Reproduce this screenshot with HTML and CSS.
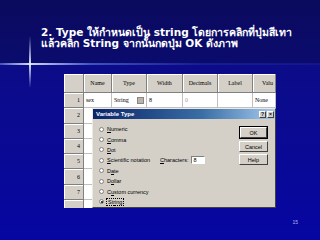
FILE: index.html
```html
<!DOCTYPE html>
<html lang="th">
<head>
    <meta charset="UTF-8">
    <title>Type - String</title>
    <link rel="stylesheet" href="styles.css">
</head>
<body>
    <section class="slide">
        <div class="flare-h"></div>
        <div class="flare-v"></div>

        <h1 class="title">2. Type ให้กำหนดเป็น string โดยการคลิกที่ปุ่มสีเทา<br>แล้วคลิก String จากนั้นกดปุ่ม OK ดังภาพ</h1>

        <div class="shot">
            <div class="sheet">
                <div class="hd"></div>
                <div class="hd">Name</div>
                <div class="hd">Type</div>
                <div class="hd">Width</div>
                <div class="hd">Decimals</div>
                <div class="hd">Label</div>
                <div class="hd left">Valu</div>

                <div class="rh">1</div>
                <div class="cell">sex</div>
                <div class="cell type">String <span class="dots"></span></div>
                <div class="cell">8</div>
                <div class="cell dim">0</div>
                <div class="cell"></div>
                <div class="cell">None</div>

                <div class="rh">2</div><div class="cell"></div><div class="cell"></div><div class="cell"></div><div class="cell"></div><div class="cell"></div><div class="cell"></div>
                <div class="rh">3</div><div class="cell"></div><div class="cell"></div><div class="cell"></div><div class="cell"></div><div class="cell"></div><div class="cell"></div>
                <div class="rh">4</div><div class="cell"></div><div class="cell"></div><div class="cell"></div><div class="cell"></div><div class="cell"></div><div class="cell"></div>
                <div class="rh">5</div><div class="cell"></div><div class="cell"></div><div class="cell"></div><div class="cell"></div><div class="cell"></div><div class="cell"></div>
                <div class="rh">6</div><div class="cell"></div><div class="cell"></div><div class="cell"></div><div class="cell"></div><div class="cell"></div><div class="cell"></div>
                <div class="rh">7</div><div class="cell"></div><div class="cell"></div><div class="cell"></div><div class="cell"></div><div class="cell"></div><div class="cell"></div>
                <div class="rh"></div><div class="cell"></div><div class="cell"></div><div class="cell"></div><div class="cell"></div><div class="cell"></div><div class="cell"></div>
            </div>

            <div class="dialog">
                <div class="titlebar">
                    <span>Variable Type</span>
                    <span class="tbtn">?</span>
                    <span class="tbtn">×</span>
                </div>
                <div class="dlg-body">
                    <div class="options">
                        <label class="opt"><i class="radio"></i><span><u>N</u>umeric</span></label>
                        <span></span>
                        <label class="opt"><i class="radio"></i><span><u>C</u>omma</span></label>
                        <span></span>
                        <label class="opt"><i class="radio"></i><span><u>D</u>ot</span></label>
                        <span></span>
                        <label class="opt"><i class="radio"></i><span><u>S</u>cientific notation</span></label>
                        <div class="chars"><span><u>C</u>haracters:</span> <span class="field">8</span></div>
                        <label class="opt"><i class="radio"></i><span>D<u>a</u>te</span></label>
                        <span></span>
                        <label class="opt"><i class="radio"></i><span>D<u>o</u>llar</span></label>
                        <span></span>
                        <label class="opt"><i class="radio"></i><span>C<u>u</u>stom currency</span></label>
                        <span></span>
                        <label class="opt"><i class="radio on"></i><span class="focus">St<u>r</u>ing</span></label>
                    </div>
                    <div class="buttons">
                        <button class="def">OK</button>
                        <button>Cancel</button>
                        <button>Help</button>
                    </div>
                </div>
            </div>
        </div>

        <div class="page">15</div>
    </section>
</body>
</html>
```

FILE: styles.css
```css
* {
    margin: 0;
    padding: 0;
    box-sizing: border-box;
}

body {
    background-color: #0a0a6a;
}

.slide {
    position: relative;
    width: 320px;
    height: 240px;
    overflow: hidden;
    padding-top: 27px;
    background: linear-gradient(#0a0a5e 0px, #0b0b6e 63px, #0c0c88 65px, #0606a2 240px);
    font-family: "Liberation Sans", "Noto Sans", sans-serif;
}

/* sparkle line */
.flare-h {
    position: absolute;
    left: 0;
    top: 63px;
    width: 320px;
    height: 2px;
    background: linear-gradient(to right, rgba(120,150,255,.5), rgba(220,230,255,.95) 30px, rgba(110,140,255,.55) 90px, rgba(60,80,220,.25) 200px, rgba(60,80,220,.15));
}

.flare-v {
    position: absolute;
    left: 29px;
    top: 36px;
    width: 2px;
    height: 52px;
    background: linear-gradient(rgba(120,150,255,0), rgba(230,240,255,.95) 28px, rgba(120,150,255,0));
}

.title {
    margin-left: 41px;
    color: #fff;
    font-size: 10.5px;
    line-height: 11px;
    font-weight: bold;
    font-family: "DejaVu Sans", "Noto Sans", sans-serif;
    white-space: nowrap;
}

.shot {
    position: relative;
    margin: 25px 0 0 64px;
    width: 212px;
    height: 134px;
    overflow: hidden;
    background-color: #fff;
}

.sheet {
    display: grid;
    grid-template-columns: 20px 28px 35px 36px 35px 35px 23px;
    grid-template-rows: 19px;
    grid-auto-rows: 15.3px;
    font-family: "Liberation Serif", serif;
    font-size: 6px;
    color: #000;
}

.sheet .hd {
    background-color: #d4d0c8;
    border-right: 1px solid #808080;
    border-bottom: 1px solid #808080;
    box-shadow: inset 1px 1px 0 #fff;
    display: flex;
    align-items: center;
    justify-content: center;
    overflow: hidden;
    white-space: nowrap;
}

.sheet .hd.left {
    justify-content: flex-start;
    padding-left: 9px;
}

.sheet .rh {
    background-color: #d4d0c8;
    border-right: 1px solid #808080;
    border-bottom: 1px solid #808080;
    box-shadow: inset 1px 1px 0 #fff;
    padding-right: 3px;
    display: flex;
    align-items: center;
    justify-content: flex-end;
}

.sheet .cell {
    background-color: #fff;
    border-right: 1px solid #c0c0c0;
    border-bottom: 1px solid #c0c0c0;
    display: flex;
    align-items: center;
    padding-left: 2px;
    overflow: hidden;
    white-space: nowrap;
}

.sheet .cell.dim {
    color: #a0a0a0;
}

.sheet .cell.type {
    justify-content: space-between;
    padding-right: 2px;
}

.dots {
    width: 7px;
    height: 7px;
    background-color: #b8b4ac;
    border: 1px solid #8a8780;
}

.dialog {
    position: absolute;
    left: 28px;
    top: 34px;
    width: 184px;
    height: 100px;
    background-color: #d4d0c8;
    border: 1px solid;
    border-color: #ece9e2 #404040 #404040 #ece9e2;
}

.titlebar {
    height: 10px;
    display: flex;
    align-items: center;
    gap: 1px;
    padding: 0 1px 0 3px;
    background: linear-gradient(to right, #0a246a, #3a6ea5 60%, #a6caf0);
    color: #fff;
    font-family: "Liberation Sans", sans-serif;
    font-size: 6px;
    font-weight: bold;
}

.titlebar span:first-child {
    flex: 1;
}

.tbtn {
    width: 7px;
    height: 7px;
    background-color: #d4d0c8;
    border: 1px solid;
    border-color: #fff #404040 #404040 #fff;
    color: #000;
    font-size: 5px;
    line-height: 5px;
    text-align: center;
}

.dlg-body {
    display: flex;
    padding: 5px 7px 0 6px;
    font-size: 5.5px;
    color: #000;
}

.options {
    flex: 1;
    display: grid;
    grid-template-columns: 61px auto;
    grid-auto-rows: 10.4px;
}

.opt {
    display: flex;
    align-items: center;
    gap: 3px;
    white-space: nowrap;
}

.radio {
    width: 5px;
    height: 5px;
    border-radius: 50%;
    background-color: #fff;
    border: 1px solid #808080;
    display: flex;
    align-items: center;
    justify-content: center;
}

.radio.on::after {
    content: "";
    width: 2px;
    height: 2px;
    border-radius: 50%;
    background-color: #000;
}

.focus {
    outline: 1px dotted #000;
    padding: 0 1px;
}

.chars {
    display: flex;
    align-items: center;
    gap: 3px;
    white-space: nowrap;
}

.field {
    width: 14px;
    height: 8px;
    background-color: #fff;
    border: 1px solid;
    border-color: #808080 #fff #fff #808080;
    padding-left: 1px;
    line-height: 6px;
}

.buttons {
    display: flex;
    flex-direction: column;
    gap: 2px;
    width: 29px;
    padding-top: 2px;
}

.buttons button {
    height: 11px;
    background-color: #d4d0c8;
    border: 1px solid;
    border-color: #fff #404040 #404040 #fff;
    font-family: "Liberation Sans", sans-serif;
    font-size: 5.5px;
    color: #000;
}

.buttons button.def {
    height: 13px;
    outline: 1px solid #000;
    outline-offset: -1px;
    border-width: 2px;
}

.page {
    margin: 11px 22px 0 0;
    text-align: right;
    color: #b0b8f0;
    font-size: 5px;
}
```
